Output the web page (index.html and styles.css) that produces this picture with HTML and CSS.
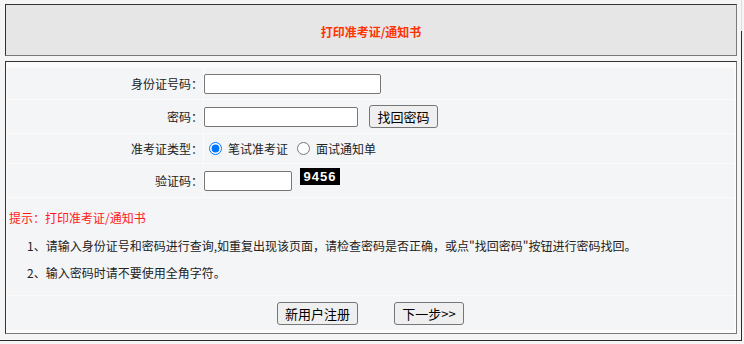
FILE: index.html
```html
<!DOCTYPE html>
<html lang="zh-CN">
<head>
<meta charset="utf-8">
<title>打印准考证/通知书</title>
<link rel="stylesheet" href="styles.css">
</head>
<body>
<div class="outer">
  <div class="title-box"><span class="title">打印准考证/通知书</span></div>
  <form class="form-box">
    <div class="field-row r1">
      <div class="label">身份证号码：</div>
      <div class="value"><input type="text" class="inp inp-id"></div>
    </div>
    <div class="field-row r2">
      <div class="label">密码：</div>
      <div class="value"><input type="password" class="inp inp-pwd"><button type="button" class="btn btn-find">找回密码</button></div>
    </div>
    <div class="field-row r3">
      <div class="label">准考证类型：</div>
      <div class="value">
        <label class="opt"><input type="radio" name="kind" class="radio" checked>笔试准考证</label>
        <label class="opt"><input type="radio" name="kind" class="radio">面试通知单</label>
      </div>
    </div>
    <div class="field-row r4">
      <div class="label">验证码：</div>
      <div class="value value-top"><input type="text" class="inp inp-code"><span class="captcha">9456</span></div>
    </div>
    <div class="tips">
      <p class="tip-title">提示：打印准考证/通知书</p>
      <p class="tip-line">1、请输入身份证号和密码进行查询,如重复出现该页面，请检查密码是否正确，或点"找回密码"按钮进行密码找回。</p>
      <p class="tip-line">2、输入密码时请不要使用全角字符。</p>
    </div>
    <div class="actions">
      <button type="button" class="btn btn-reg">新用户注册</button>
      <button type="button" class="btn btn-next">下一步&gt;&gt;</button>
    </div>
  </form>
</div>
</body>
</html>
```
FILE: styles.css
```css
html, body {
  margin: 0;
  background: #f5f5f5;
}
body {
  font-family: "Noto Sans CJK SC", "Microsoft YaHei", sans-serif;
  font-size: 12px;
  color: #222;
}
.outer {
  position: relative;
  width: 732px;
  padding: 4px 4px 6px 5px;
  border-right: 1px solid #2a2a2a;
  border-bottom: 1px solid #2a2a2a;
}
.outer::after {
  content: "";
  position: absolute;
  top: 0;
  right: -1px;
  width: 1px;
  height: 31px;
  background: #dedede;
}
.title-box {
  box-sizing: border-box;
  height: 52px;
  padding-top: 2px;
  border: 1px solid;
  border-color: #333 #7a7a7a #7a7a7a #333;
  background: #e6e6e6;
  display: flex;
  align-items: center;
  justify-content: center;
}
.title {
  color: #ff3300;
  font-weight: bold;
}
.form-box {
  box-sizing: border-box;
  height: 273px;
  margin: 5px 0 0;
  padding: 6px 2px 3px 1px;
  border: 1px solid;
  border-color: #333 #7a7a7a #7a7a7a #333;
  background: #fbfbfb;
  display: grid;
  grid-template-rows: 31px 33px 29px 33px 97px 34px;
  row-gap: 1px;
}
.field-row {
  display: grid;
  grid-template-columns: 196px 1fr;
  column-gap: 1px;
}
.label, .value, .tips, .actions {
  background: #f4f5f7;
}
.label {
  display: flex;
  align-items: center;
  justify-content: flex-end;
}
.value {
  display: flex;
  align-items: center;
}
.value-top {
  align-items: flex-start;
}
.inp {
  box-sizing: border-box;
  height: 20px;
  margin: 0;
  padding: 1px 2px;
  border: 1px solid #767676;
  border-radius: 2px;
  background: #fff;
  font: 13px "Noto Sans CJK SC", sans-serif;
}
.inp-id { width: 177px; }
.inp-pwd { width: 154px; }
.inp-code { width: 88px; margin-top: 7px; }
.btn {
  box-sizing: border-box;
  height: 23px;
  margin: 0;
  padding: 0;
  border: 1px solid #767676;
  border-radius: 3px;
  background: #efefef;
  color: #000;
  font: 13px "Noto Sans CJK SC", sans-serif;
  line-height: 21px;
  text-align: center;
}
.btn-find { width: 69px; margin-left: 11px; }
.btn-reg { width: 81px; }
.btn-next { width: 70px; }
.opt {
  display: flex;
  align-items: center;
  margin-right: 4px;
}
.radio {
  width: 13px;
  height: 13px;
  margin: 0 6px 0 5px;
}
.captcha {
  box-sizing: border-box;
  width: 40px;
  height: 17px;
  margin: 4px 0 0 8px;
  background: #000;
  color: #fff;
  font: bold 13px "Liberation Sans", Arial, sans-serif;
  letter-spacing: 1px;
  line-height: 17px;
  text-align: center;
}
.tips {
  padding: 11px 0 0 2px;
}
.tips p {
  margin: 0;
}
.tip-title {
  color: #ff1a1a;
  line-height: 17px;
  margin-bottom: 6px !important;
}
.tip-line {
  padding-left: 18px;
  line-height: 27px;
}
.actions {
  display: flex;
  align-items: center;
  justify-content: center;
  gap: 36px;
}
```
